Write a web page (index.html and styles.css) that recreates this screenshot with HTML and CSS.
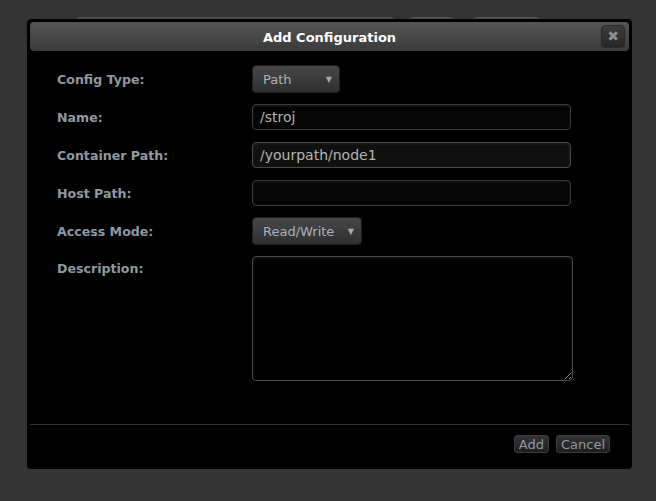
FILE: index.html
```html
<!DOCTYPE html>
<html lang="en">
<head>
  <meta charset="UTF-8">
  <title>Add Configuration</title>
  <link rel="stylesheet" href="styles.css">
</head>
<body>

  <!-- page behind the dialog -->
  <div class="toolbar">
    <div class="tb-search"></div>
    <div class="tb-btn small"></div>
    <div class="tb-btn wide"></div>
  </div>

  <div class="dialog">
    <div class="dialog-title">
      <span>Add Configuration</span>
      <button class="close-btn">&#10006;</button>
    </div>

    <form class="config-form">
      <label>Config Type:</label>
      <div class="select path-select"><span>Path</span><i>&#9660;</i></div>

      <label>Name:</label>
      <input type="text" value="/stroj">

      <label>Container Path:</label>
      <input type="text" class="focused" value="/yourpath/node1">

      <label>Host Path:</label>
      <input type="text" value="">

      <label>Access Mode:</label>
      <div class="select mode-select"><span>Read/Write</span><i>&#9660;</i></div>

      <label>Description:</label>
      <textarea></textarea>
    </form>

    <div class="dialog-footer">
      <button class="btn">Add</button>
      <button class="btn">Cancel</button>
    </div>
  </div>

</body>
</html>
```

FILE: styles.css
```css
body {
  margin: 0;
  background: #333;
  font-family: 'DejaVu Sans', Verdana, sans-serif;
  height: 501px;
  overflow: hidden;
}

.toolbar {
  display: flex;
  padding: 17px 0 0 76px;
  gap: 15px;
}

.tb-search {
  width: 318px;
  height: 26px;
  background: #444;
  border-top: 1px solid #555;
  border-radius: 4px;
}

.tb-btn {
  height: 26px;
  background: #484848;
  border-top: 1px solid #595959;
  border-radius: 5px;
}

.tb-btn.small {
  width: 45px;
}

.tb-btn.wide {
  width: 67px;
  margin-left: 4px;
}

.dialog {
  position: absolute;
  left: 27px;
  top: 19px;
  width: 599px;
  height: 444px;
  padding: 3px;
  background: #000;
  border-radius: 4px;
  display: flex;
  flex-direction: column;
}

.dialog-title {
  box-sizing: border-box;
  height: 29px;
  padding-top: 2px;
  background: linear-gradient(#555, #3a3a3a);
  border-radius: 4px;
  display: flex;
  align-items: center;
  justify-content: center;
  position: relative;
  color: #fff;
  font-weight: bold;
  font-size: 13px;
}

.close-btn {
  position: absolute;
  right: 4px;
  top: 3px;
  width: 24px;
  height: 23px;
  padding: 0;
  background: linear-gradient(#3c3c3c, #262626);
  border: 1px solid #2a2a2a;
  border-radius: 4px;
  color: #8f8f8f;
  font-size: 14px;
  font-weight: bold;
  line-height: 21px;
  font-family: 'DejaVu Sans', sans-serif;
}

.config-form {
  display: grid;
  grid-template-columns: 195px 321px;
  grid-auto-rows: 38px;
  padding: 9px 0 0 27px;
  align-items: center;
}

.config-form label {
  color: #8e99a3;
  font-weight: bold;
  font-size: 12.6px;
}

.config-form label:last-of-type {
  align-self: start;
  line-height: 38px;
}

.select {
  box-sizing: border-box;
  height: 28px;
  display: flex;
  align-items: center;
  justify-content: space-between;
  padding: 0 7px 0 10px;
  background: linear-gradient(#474747, #2f2f2f);
  border: 1px solid #1e1e1e;
  border-radius: 4px;
  color: #a9b3bd;
  font-size: 13px;
}

.select i {
  font-style: normal;
  font-size: 8px;
  color: #aaa;
}

.path-select {
  width: 88px;
}

.mode-select {
  width: 110px;
}

input {
  box-sizing: border-box;
  width: 319px;
  height: 26px;
  padding: 0 7px;
  background: #050505;
  border: 1px solid #3c3c3c;
  border-radius: 4px;
  box-shadow: inset 0 1px 3px rgba(255,255,255,0.08);
  color: #b4b4b4;
  font-family: 'DejaVu Sans', sans-serif;
  font-size: 14px;
  outline: none;
}

input.focused {
  background: #101010;
  border-color: #474747;
}

textarea {
  box-sizing: border-box;
  align-self: start;
  width: 321px;
  height: 125px;
  margin-top: 6px;
  background: #000;
  border: 1px solid #474747;
  border-radius: 4px;
  box-shadow: inset 0 1px 3px rgba(255,255,255,0.1);
  color: #b4b4b4;
  font-family: 'DejaVu Sans', sans-serif;
}

.dialog-footer {
  box-sizing: border-box;
  margin-top: auto;
  border-top: 1px solid #333;
  height: 42px;
  display: flex;
  justify-content: flex-end;
  align-items: flex-start;
  gap: 7px;
  padding: 10px 19px 0 0;
}

.btn {
  height: 18px;
  padding: 0 4px;
  background: linear-gradient(#343434, #1e1e1e);
  border: 1px solid #3c3c3c;
  border-radius: 3px;
  color: #8d9aa6;
  font-family: 'DejaVu Sans', sans-serif;
  font-size: 13px;
  line-height: 15px;
}
```
